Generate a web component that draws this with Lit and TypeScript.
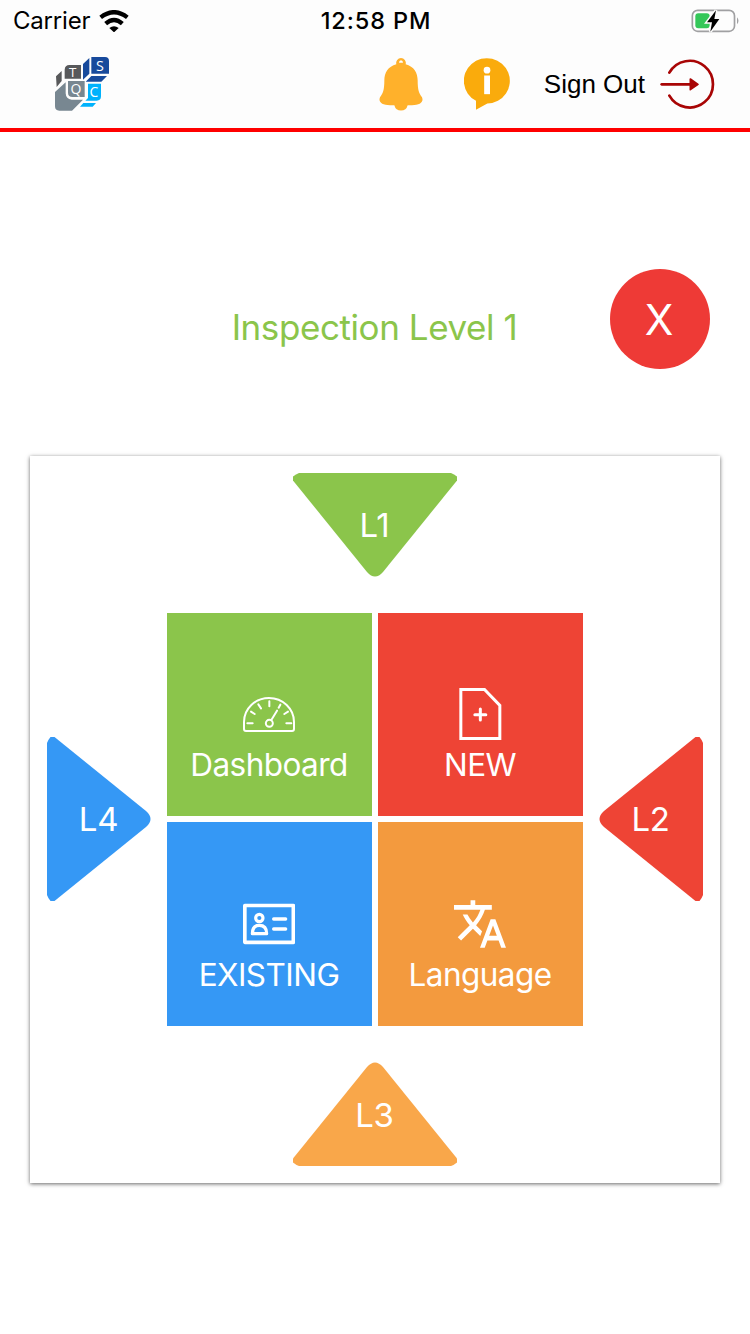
import { LitElement, html, css, svg } from "lit";
import { customElement, property } from "lit/decorators.js";

const trianglePaths: Record<string, string> = {
  down: "M6 0H158Q161 1 164 3.500V7.500L90 99Q82 108 74 99L0 7.500V3.500Q3 1 6 0Z",
  up: "M6 104H158Q161 103 164 100.500V96.500L90 5Q82 -4 74 5L0 96.500V100.500Q3 103 6 104Z",
  right: "M0 6V158Q1 161 3.500 164H7.500L99 90Q108 82 99 74L7.500 0H3.500Q1 3 0 6Z",
  left: "M104 6V158Q103 161 100.500 164H96.500L5 90Q-4 82 5 74L96.500 0H100.500Q103 3 104 6Z",
};

@customElement("level-arrow")
export class LevelArrow extends LitElement {
  @property() label = "";
  @property() direction = "down";

  static styles = css`
    :host { display: block; color: #fff; }
    .arrow { display: grid; place-items: center; }
    .shape, .label { grid-area: 1 / 1; }
    .shape { display: block; fill: var(--arrow-color); }
    .label { font: 400 33px/40px Inter, "Liberation Sans", sans-serif; letter-spacing: -0.300px; padding-right: 1px; }
    .label.up { padding-top: 2px; }
  `;

  render() {
    const flat = this.direction === "down" || this.direction === "up";
    const w = flat ? 164 : 104;
    const h = flat ? 104 : 164;
    return html`<div class="arrow">
      <svg class="shape" width=${w} height=${h} viewBox="0 0 ${w} ${h}">
        <path d=${trianglePaths[this.direction]}></path>
      </svg>
      <span class="label ${this.direction}">${this.label}</span>
    </div>`;
  }
}

const tileIcons = {
  dashboard: svg`<svg width="52" height="52" viewBox="249 264 156 156" fill="none" stroke="#fff" stroke-width="6" stroke-linecap="round">
    <path d="M252 366A75 72 0 0 1 402 366V387Q402 393 396 393H258Q252 393 252 387Z"/>
    <path d="M262 370H278M379 370H394M273 335L284 342M295 313L303 325M328 304V319M361 314L356 323M384 335L373 342M351 332L334 360"/>
    <circle cx="328" cy="370" r="10.500"/></svg>`,
  create: svg`<svg width="52" height="52" viewBox="252.5 264 156 156" fill="none" stroke="#fff" stroke-width="9">
    <path d="M273 268.500H344L390 316V415.500H273Z"/>
    <path d="M315 344H348M331.500 327V360" stroke-linecap="round"/></svg>`,
  existing: svg`<svg width="52" height="52" viewBox="249 249 156 156" fill="none" stroke="#fff" stroke-width="9.500" stroke-linejoin="round" stroke-linecap="round">
    <path d="M254.500 271.500H400V382H254.500Z" stroke-width="11"/>
    <circle cx="298" cy="309" r="11"/>
    <path d="M277 356H320Q320 331 298 331Q277 331 277 356Z"/>
    <path d="M341 312H377M341 342H377" stroke-width="10"/></svg>`,
  language: svg`<svg width="52" height="52" viewBox="1 1 22 22" fill="#fff">
    <path d="M12.870 15.070l-2.540-2.510.03-.03c1.740-1.940 2.980-4.170 3.710-6.530H17V4h-7V2H8v2H1v1.990h11.170C11.500 7.920 10.440 9.750 9 11.350 8.070 10.320 7.300 9.190 6.690 8h-2c.73 1.630 1.730 3.170 2.980 4.560l-5.090 5.020L4 19l5-5 3.110 3.110.76-2.040zM18.500 10h-2L12 22h2l1.120-3h4.750L21 22h2l-4.500-12zm-2.620 7l1.620-4.330L19.120 17h-3.240z"/></svg>`,
};

@customElement("app-root")
export class AppRoot extends LitElement {
  static styles = css`
    :host {
      display: block;
      min-height: 1334px;
      background: #fff;
      font-family: Inter, "Liberation Sans", sans-serif;
    }
    svg { display: block; }
    .header { box-sizing: border-box; height: 132px; border-bottom: 4px solid #f00; background: #fdfdfd; }
    .status {
      display: grid; grid-template-columns: 1fr auto 1fr; align-items: center;
      height: 40px; padding: 0 10px 0 13px; box-sizing: border-box; color: #000;
    }
    .carrier { display: flex; align-items: center; gap: 9px; font-size: 24px; line-height: 42px; }
    .carrier-name { letter-spacing: -0.2px; }
    .clock { font-size: 23.500px; font-weight: 550; line-height: 42px; letter-spacing: 0.900px; margin-right: 1px; }
    .battery { justify-self: end; }
    .toolbar { display: flex; align-items: center; height: 88px; padding: 0 35px 0 55px; }
    .bell { margin-left: auto; }
    .info { margin-left: 41px; }
    .sign-out {
      display: flex; align-items: center; gap: 15px; margin-left: 34px;
      font: 26px/30px "Liberation Sans", Arial, sans-serif; color: #000;
    }
    .heading {
      display: grid; grid-template-columns: 100px 1fr 100px; align-items: center;
      padding: 137px 40px 0; height: 100px;
    }
    .title {
      grid-column: 2; margin: 15px 1px 0 0; text-align: center; color: #8bc54b;
      font-size: 35px; line-height: 44px; font-weight: 400; letter-spacing: -0.420px;
    }
    .close {
      display: grid; place-items: center; width: 100px; height: 100px; border: 0; padding: 1px 2px 0 0;
      border-radius: 50%; background: #ee3a36; color: #fff;
      font: 400 42px/50px Inter, "Liberation Sans", sans-serif;
    }
    .card {
      display: flex; flex-direction: column; align-items: center; gap: 36px;
      box-sizing: border-box; height: 727px; margin: 87px 30px 0; padding: 17px;
      background: #fff; box-shadow: 0 1px 4px rgba(0, 0, 0, 0.6);
    }
    .middle { display: flex; align-items: center; gap: 16px; }
    .tiles { display: grid; grid-template: 203px 204px / 205px 205px; gap: 6px; }
    .tile {
      display: flex; flex-direction: column; align-items: center; gap: 6px; padding: 75px 1px 0 0;
      color: #fff; font-size: 31.500px; font-weight: 400; line-height: 38px; letter-spacing: -0.550px;
    }
    .tile.blue, .tile.orange { padding-top: 76px; }
    .green { background: #8bc54b; }
    .red { background: #ee4435; }
    .blue { background: #3598f5; }
    .orange { background: #f39a3e; }
    .l1 { --arrow-color: #8bc54b; }
    .l2 { --arrow-color: #ee4435; padding-bottom: 1px; }
    .l3 { --arrow-color: #f9a74a; }
    .l4 { --arrow-color: #3598f5; padding-bottom: 1px; }
    .logo-letter { font-family: "Open Sans", "Noto Sans", sans-serif; font-weight: 500; fill: #fff; text-anchor: middle; }
  `;

  render() {
    return html`
      <header class="header">
        <div class="status">
          <div class="carrier">
            <span class="carrier-name">Carrier</span>
            <svg width="30" height="22.700" viewBox="299 26 90 68" fill="none" stroke="#000" stroke-width="13">
              <path d="M304 48Q344 17 384 48M319 67Q344 45 369 67" />
              <path d="M344 93L330 80Q344 70 358 80Z" fill="#000" stroke="none" />
            </svg>
          </div>
          <span class="clock">12:58 PM</span>
          <svg class="battery" width="49" height="24" viewBox="482 23 147 72">
            <rect x="486" y="27" width="126.500" height="63" rx="16" fill="none" stroke="#a0a0a2" stroke-width="5" />
            <path d="M620 48Q629 58 620 69Z" fill="#a0a0a2" />
            <rect x="495" y="36" width="43" height="45" rx="9" fill="#34c759" />
            <path d="M557 27L530 63H545L540 91L567 53H552Z" fill="#000" stroke="#fdfdfd" stroke-width="9" paint-order="stroke" />
          </svg>
        </div>
        <div class="toolbar">
          <svg class="logo" width="54" height="54" viewBox="165 171 162 162">
            <path fill="#58595b" d="M194 236V209Q195 195 208 195H243V236ZM168 229L185 213V243L170 261Z" />
            <path fill="#174a9c" d="M249 192L268 174V221L249 239ZM274 171H315Q327 171 327 183V221H274ZM274 228H321L304 245H257Z" />
            <path fill="#788791" d="M204 243H254V291H218Q204 291 204 278ZM165 276L197 247V280Q198 298 215 299H249L216 332H178Q165 332 165 319Z" />
            <path fill="#00b2fc" d="M264 251H303V289Q303 302 290 302H256L264 294ZM250 309H288L278 320H240Z" />
            <text class="logo-letter" x="218" y="230" font-size="40">T</text>
            <text class="logo-letter" x="300" y="212" font-size="43">S</text>
            <text class="logo-letter" x="228" y="281" font-size="42">Q</text>
            <text class="logo-letter" x="282" y="291" font-size="42">C</text>
          </svg>
          <svg class="bell" width="44" height="53" viewBox="237 172.500 132 159" fill="#ffb12b">
            <path fill-rule="evenodd" d="M289 191A14.500 14.500 0 1 1 317 191C342 198 353 216 353 240C353 268 357 279 366 290C372 305 360 314 336 314H323Q319 330 303 330Q287 330 283 314H270C246 314 234 305 240 290C249 279 253 268 253 240C253 216 264 198 289 191ZM297 187H309Q309 179 303 179Q297 179 297 187Z" />
          </svg>
          <svg class="info" width="46" height="53" viewBox="492 173.500 138 159">
            <path fill="#faab0c" d="M528 300V329L562 310A69 68 0 1 0 528 302Z" />
            <circle cx="561" cy="210" r="10" fill="#fff" />
            <rect x="552.500" y="226" width="17.500" height="56" fill="#fff" />
          </svg>
          <div class="sign-out">
            <span>Sign Out</span>
            <svg width="55" height="51" viewBox="389 176 165 153" fill="none" stroke="#a80505" stroke-width="8" stroke-linecap="round">
              <path d="M417 217A70 70 0 1 1 417 286" />
              <path d="M394 252H480" />
              <path d="M480 236L503 252L480 268Z" fill="#a80505" stroke-width="5" stroke-linejoin="round" />
            </svg>
          </div>
        </div>
      </header>
      <section class="heading">
        <h1 class="title">Inspection Level 1</h1>
        <button class="close">X</button>
      </section>
      <main class="card">
        <level-arrow class="l1" direction="down" label="L1"></level-arrow>
        <div class="middle">
          <level-arrow class="l4" direction="right" label="L4"></level-arrow>
          <div class="tiles">
            <div class="tile green">${tileIcons.dashboard}<span>Dashboard</span></div>
            <div class="tile red">${tileIcons.create}<span>NEW</span></div>
            <div class="tile blue">${tileIcons.existing}<span>EXISTING</span></div>
            <div class="tile orange">${tileIcons.language}<span>Language</span></div>
          </div>
          <level-arrow class="l2" direction="left" label="L2"></level-arrow>
        </div>
        <level-arrow class="l3" direction="up" label="L3"></level-arrow>
      </main>
    `;
  }
}
